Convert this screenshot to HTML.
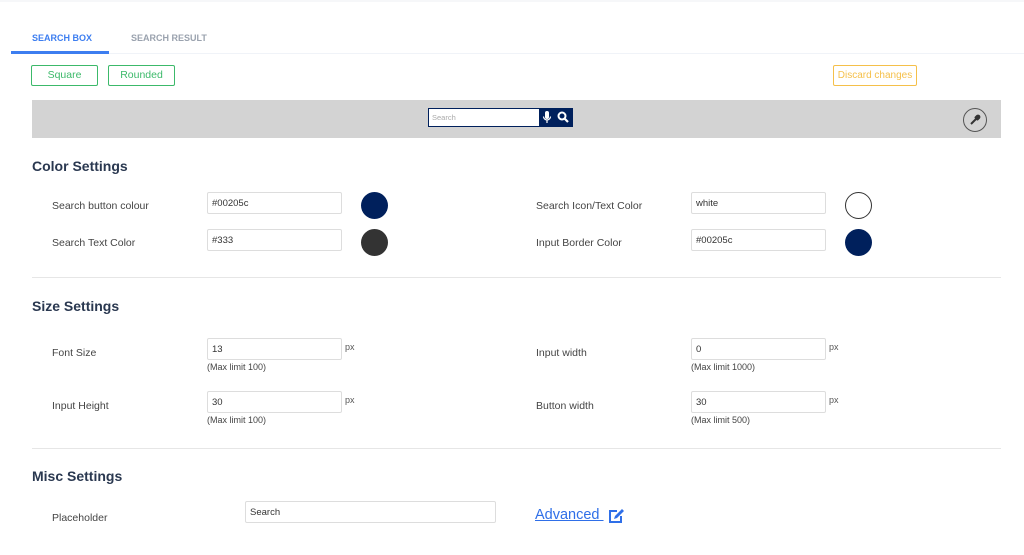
<!DOCTYPE html>
<html><head><meta charset="utf-8"><style>
*{margin:0;padding:0;box-sizing:border-box}
body{width:1024px;height:555px;background:#fff;font-family:"Liberation Sans",sans-serif;position:relative;overflow:hidden;color:#444}
.a{position:absolute}
.tab{font-size:9px;font-weight:bold;top:33px}
.btn{position:absolute;top:65px;height:21px;border:1px solid #3cb96a;border-radius:2px;color:#3cb96a;font-size:10.5px;text-align:center;line-height:19px}
h2{position:absolute;left:32px;font-size:14px;color:#2a3850;font-weight:bold}
.lbl{position:absolute;font-size:10.5px;color:#444}
.in{position:absolute;width:135px;height:22px;border:1px solid #ddd;border-radius:2px;font-size:9.5px;color:#333;padding:5px 4px}
.c{position:absolute;width:27px;height:27px;border-radius:50%}
.px{position:absolute;font-size:9px;color:#555}
.ml{position:absolute;font-size:9px;color:#444}
.hr{position:absolute;left:32px;width:969px;height:1px;background:#e6e6e6}
</style></head><body>
<div class="a" style="left:0;top:0;width:1024px;height:2px;background:#f6f7f9"></div>
<div class="a tab" style="left:32px;color:#3d7ef0">SEARCH BOX</div>
<div class="a tab" style="left:131px;color:#9aa2ae">SEARCH RESULT</div>
<div class="a" style="left:11px;top:53px;width:1013px;height:1px;background:#f0f3f8"></div>
<div class="a" style="left:11px;top:51px;width:98px;height:3px;background:#3d7ef0"></div>
<div class="btn" style="left:31px;width:67px">Square</div>
<div class="btn" style="left:108px;width:67px">Rounded</div>
<div class="btn" style="left:833px;width:84px;border-color:#f5c04a;color:#f5c04a;font-size:10px">Discard changes</div>
<div class="a" style="left:32px;top:100px;width:969px;height:38px;background:#d3d3d3"></div>
<div class="a" style="left:428px;top:108px;width:112px;height:19px;background:#fff;border:1px solid #00205c;font-size:7.5px;color:#aaa;padding:4px 3px">Search</div>
<div class="a" style="left:539px;top:108px;width:34px;height:19px;background:#00205c"></div>
<svg class="a" style="left:542px;top:111px" width="10" height="13" viewBox="0 0 10 13"><rect x="3" y="0" width="4" height="8" rx="2" fill="#fff"/><path d="M1.5 5.5a3.5 3.5 0 0 0 7 0M5 9v3" stroke="#fff" stroke-width="1.2" fill="none"/></svg>
<svg class="a" style="left:557px;top:111px" width="12" height="12" viewBox="0 0 12 12"><circle cx="5" cy="5" r="3.5" stroke="#fff" stroke-width="2" fill="none"/><path d="M7.5 7.5L11 11" stroke="#fff" stroke-width="2.2"/></svg>
<div class="a" style="left:963px;top:108px;width:24px;height:24px;border:1px solid #555;border-radius:50%"></div>
<svg class="a" style="left:969px;top:114px" width="12" height="12" viewBox="0 0 12 12"><path d="M2 10L7 5M6 3l3 3M8 2a1.4 1.4 0 0 1 2 2L9 5 7 3z" stroke="#333" stroke-width="2" fill="#333"/></svg>

<h2 style="top:158px">Color Settings</h2>
<div class="lbl" style="left:52px;top:200px">Search button colour</div>
<div class="in" style="left:207px;top:192px">#00205c</div>
<div class="c" style="left:361px;top:192px;background:#00205c"></div>
<div class="lbl" style="left:52px;top:237px">Search Text Color</div>
<div class="in" style="left:207px;top:229px">#333</div>
<div class="c" style="left:361px;top:229px;background:#333"></div>
<div class="lbl" style="left:536px;top:200px">Search Icon/Text Color</div>
<div class="in" style="left:691px;top:192px">white</div>
<div class="c" style="left:845px;top:192px;border:1px solid #333;background:#fff"></div>
<div class="lbl" style="left:536px;top:237px">Input Border Color</div>
<div class="in" style="left:691px;top:229px">#00205c</div>
<div class="c" style="left:845px;top:229px;background:#00205c"></div>
<div class="hr" style="top:277px"></div>

<h2 style="top:298px">Size Settings</h2>
<div class="lbl" style="left:52px;top:347px">Font Size</div>
<div class="in" style="left:207px;top:338px">13</div><div class="px" style="left:345px;top:342px">px</div><div class="ml" style="left:207px;top:362px">(Max limit 100)</div>
<div class="lbl" style="left:52px;top:400px">Input Height</div>
<div class="in" style="left:207px;top:391px">30</div><div class="px" style="left:345px;top:395px">px</div><div class="ml" style="left:207px;top:415px">(Max limit 100)</div>
<div class="lbl" style="left:536px;top:347px">Input width</div>
<div class="in" style="left:691px;top:338px">0</div><div class="px" style="left:829px;top:342px">px</div><div class="ml" style="left:691px;top:362px">(Max limit 1000)</div>
<div class="lbl" style="left:536px;top:400px">Button width</div>
<div class="in" style="left:691px;top:391px">30</div><div class="px" style="left:829px;top:395px">px</div><div class="ml" style="left:691px;top:415px">(Max limit 500)</div>
<div class="hr" style="top:448px"></div>

<h2 style="top:468px">Misc Settings</h2>
<div class="lbl" style="left:52px;top:512px">Placeholder</div>
<div class="in" style="left:245px;top:501px;width:251px">Search</div>
<div class="a" style="left:535px;top:507px;font-size:14.5px;color:#2f6fe8;text-decoration:underline">Advanced&nbsp;</div>
<svg class="a" style="left:608px;top:508px" width="18" height="16" viewBox="0 0 18 16"><path d="M9 3H2v11h11V8" stroke="#2f6fe8" stroke-width="2" fill="none"/><path d="M6 11l1-3 7-7 2 2-7 7z" fill="#2f6fe8"/></svg>
</body></html>
